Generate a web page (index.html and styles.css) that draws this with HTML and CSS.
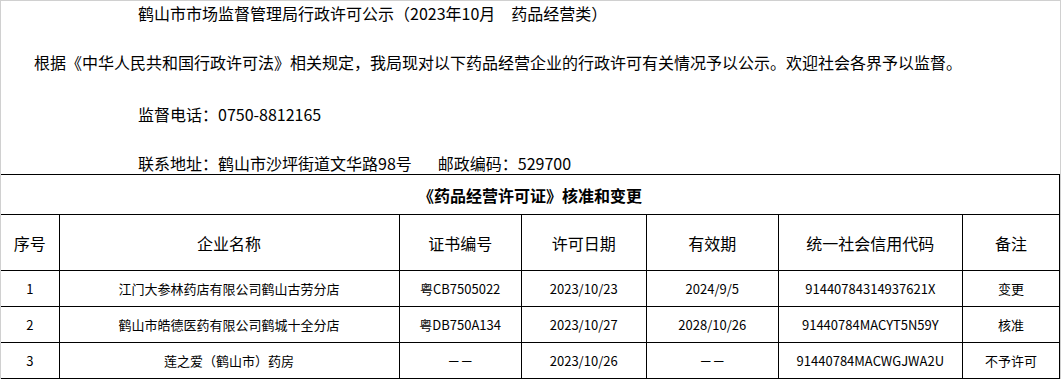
FILE: index.html
```html
<!DOCTYPE html>
<html lang="zh-CN">
<head>
    <meta charset="UTF-8">
    <meta name="viewport" content="width=device-width, initial-scale=1.0">
    <title>鹤山市市场监督管理局行政许可公示</title>
    <link rel="stylesheet" href="styles.css">
</head>
<body>
    <div class="page">
        <!-- 公示说明 -->
        <p class="line title-line">鹤山市市场监督管理局行政许可公示（2023年10月　药品经营类）</p>
        <p class="line intro">根据《中华人民共和国行政许可法》相关规定，我局现对以下药品经营企业的行政许可有关情况予以公示。欢迎社会各界予以监督。</p>
        <p class="line phone">监督电话：0750-8812165</p>
        <p class="line address">联系地址：鹤山市沙坪街道文华路98号<span class="gap"></span>邮政编码：529700</p>

        <!-- 许可表 -->
        <table class="permits">
            <colgroup>
                <col class="c-no">
                <col class="c-name">
                <col class="c-cert">
                <col class="c-date">
                <col class="c-valid">
                <col class="c-code">
                <col class="c-note">
            </colgroup>
            <tr class="caption-row">
                <td colspan="7">《药品经营许可证》核准和变更</td>
            </tr>
            <tr class="head-row">
                <td>序号</td>
                <td>企业名称</td>
                <td>证书编号</td>
                <td>许可日期</td>
                <td>有效期</td>
                <td>统一社会信用代码</td>
                <td>备注</td>
            </tr>
            <tr class="data-row">
                <td>1</td>
                <td>江门大参林药店有限公司鹤山古劳分店</td>
                <td>粤CB7505022</td>
                <td>2023/10/23</td>
                <td>2024/9/5</td>
                <td>91440784314937621X</td>
                <td>变更</td>
            </tr>
            <tr class="data-row">
                <td>2</td>
                <td>鹤山市皓德医药有限公司鹤城十全分店</td>
                <td>粤DB750A134</td>
                <td>2023/10/27</td>
                <td>2028/10/26</td>
                <td>91440784MACYT5N59Y</td>
                <td>核准</td>
            </tr>
            <tr class="data-row">
                <td>3</td>
                <td>莲之爱（鹤山市）药房</td>
                <td>－－</td>
                <td>2023/10/26</td>
                <td>－－</td>
                <td>91440784MACWGJWA2U</td>
                <td>不予许可</td>
            </tr>
        </table>
    </div>
</body>
</html>
```

FILE: styles.css
```css
html, body {
    margin: 0;
    padding: 0;
    background: #fff;
}
body {
    font-family: "Noto Sans CJK SC", "Noto Sans", sans-serif;
    color: #000;
}
.page {
    width: 1059px;
    height: 378px;
    border: 1px solid #d0d0d0;
    border-bottom: none;
    overflow: hidden;
}
.line {
    margin: 0;
    font-size: 16px;
    line-height: 24px;
    white-space: nowrap;
}
.title-line {
    padding-left: 137px;
}
.intro {
    margin-top: 25px;
    padding-left: 33px;
}
.phone {
    margin-top: 28px;
    padding-left: 137px;
}
.address {
    margin-top: 26px;
    padding-left: 137px;
    line-height: 22px;
}
.gap {
    display: inline-block;
    width: 26px;
}
.permits {
    width: 1059px;
    border-collapse: collapse;
    table-layout: fixed;
}
.permits td {
    border: 1px solid #000;
    text-align: center;
    padding: 0;
    white-space: nowrap;
}
.permits td:first-child {
    border-left: none;
}
.c-no { width: 58px; }
.c-name { width: 340px; }
.c-cert { width: 122px; }
.c-date { width: 125px; }
.c-valid { width: 132px; }
.c-code { width: 184px; }
.c-note { width: 97px; }
.caption-row td {
    height: 39px;
    font-size: 16px;
    font-weight: bold;
}
.head-row td {
    height: 55px;
    font-size: 16px;
}
.data-row td {
    height: 35px;
    font-size: 13px;
}
```
